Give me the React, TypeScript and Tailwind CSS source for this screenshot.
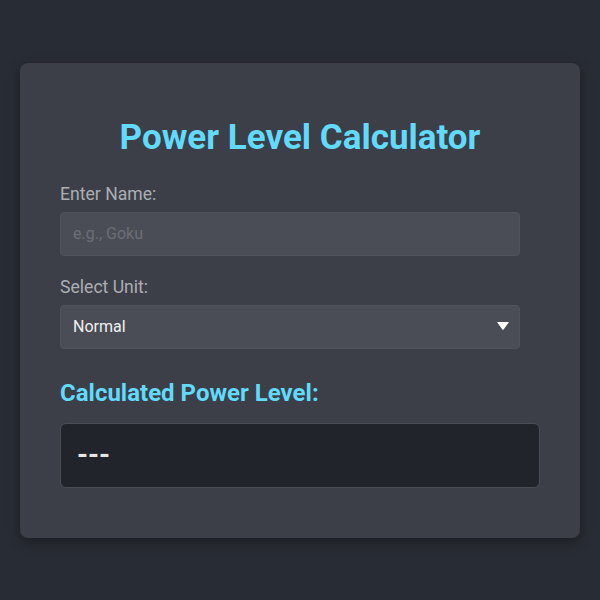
export default function App() {
  return (
    <div
      className="min-h-screen bg-[#282c34] flex items-center justify-center"
      style={{ fontFamily: "Roboto, 'Noto Sans', sans-serif" }}
    >
      <div className="w-[560px] rounded-lg bg-[#3c3f47] px-10 pt-[54px] pb-[50px] shadow-[0_4px_12px_rgba(0,0,0,0.35)]">
        <h1 className="text-center text-[35px] leading-[42px] font-bold text-[#61dafb] mb-[22px]">
          Power Level Calculator
        </h1>

        <label className="block text-[17.6px] leading-[26px] text-[#abaeb4] mb-[5px]">Enter Name:</label>
        <input
          type="text"
          placeholder="e.g., Goku"
          className="block w-[460px] h-[44px] rounded bg-[#4a4d55] border border-[#50535b] px-3 text-base text-white placeholder:text-[#6c6f77] outline-none"
        />

        <label className="block text-[17.6px] leading-[26px] text-[#abaeb4] mt-[18px] mb-[5px]">Select Unit:</label>
        <div className="relative w-[460px]">
          <div className="flex items-center h-[44px] rounded bg-[#4a4d55] border border-[#50535b] px-3 text-base text-[#f0f0f0]">
            Normal
          </div>
          <svg className="absolute right-[11px] top-[17px]" width="12" height="8" viewBox="0 0 12 8">
            <path d="M0 0 L12 0 L6.6 7.4 Q6 8 5.4 7.4 Z" fill="#ffffff" />
          </svg>
        </div>

        <h2 className="text-2xl leading-8 font-bold text-[#61dafb] mt-[28px] mb-[14px]">
          Calculated Power Level:
        </h2>
        <div className="flex items-center h-[65px] rounded-md bg-[#21252b] border border-[#4a4d55] px-4 text-[28px] font-bold text-[#e6e6e6]">
          ---
        </div>
      </div>
    </div>
  );
}
